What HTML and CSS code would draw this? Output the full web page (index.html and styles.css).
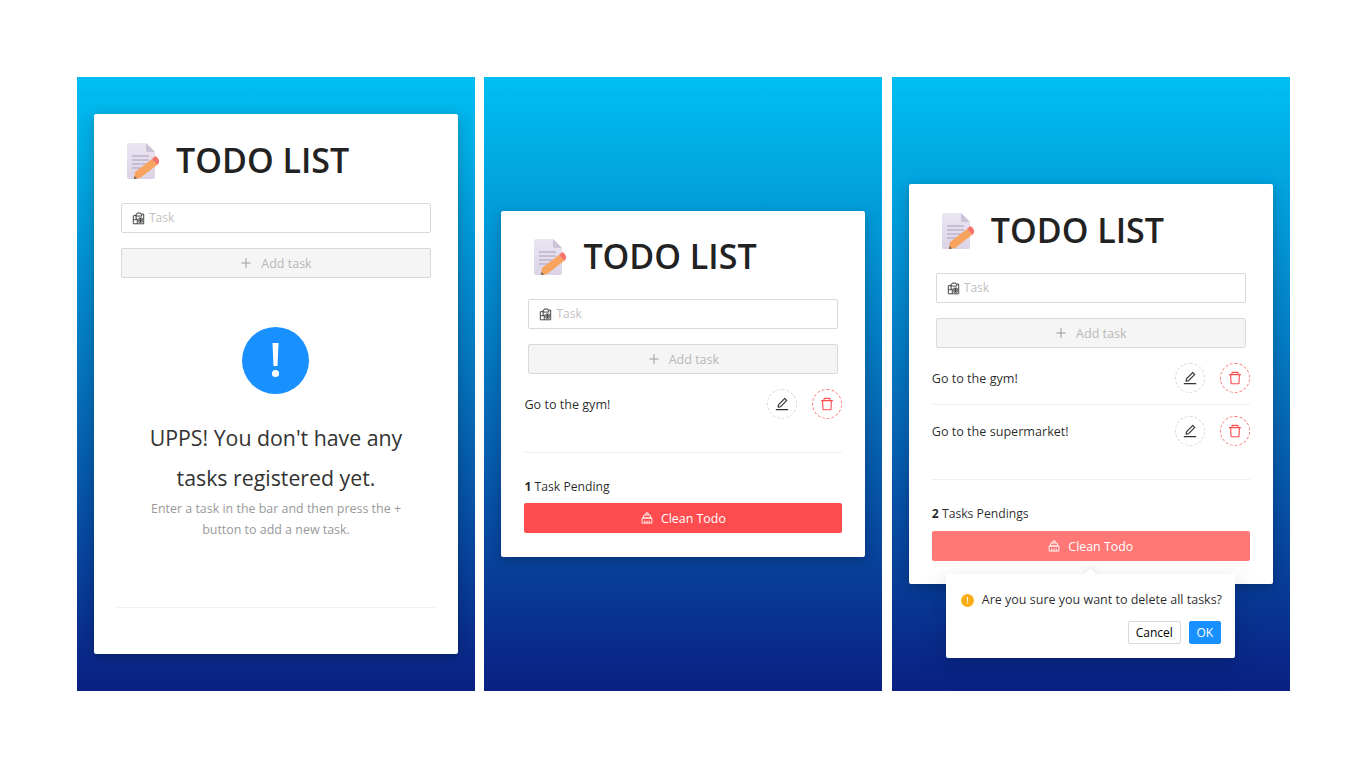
FILE: index.html
```html
<!DOCTYPE html>
<html lang="en">

<head>
    <meta charset="UTF-8">
    <meta name="viewport" content="width=device-width, initial-scale=1.0">
    <title>Todo List</title>
    <link rel="stylesheet" href="styles.css">
</head>

<body>
    <!-- Shared icons -->
    <svg class="sprite" aria-hidden="true">
        <defs>
            <linearGradient id="pageFill" x1="0" y1="0" x2="0" y2="1">
                <stop offset="0" stop-color="#ebe4f1" />
                <stop offset="1" stop-color="#dcd4e6" />
            </linearGradient>
        </defs>
        <symbol id="logo" viewBox="0 0 32 36">
            <path d="M2 0h17l9 9v25a2 2 0 0 1-2 2H2a2 2 0 0 1-2-2V2a2 2 0 0 1 2-2z" fill="url(#pageFill)" />
            <path d="M19 0l9 9h-7a2 2 0 0 1-2-2z" fill="#cbc2d8" />
            <path d="M5 13h17M5 17h17M5 21h14M5 25h9" stroke="#bdb3cb" stroke-width="1.300" />
            <path d="M8 29l17-13 5 6-17 13-6 1z" fill="#f8a45f" />
            <path d="M25 16l2-2a2 2 0 0 1 3 0l2 3a2 2 0 0 1 0 3l-2 2z" fill="#f8736b" />
            <path d="M7.500 33l-.5 3 3-.5z" fill="#6b5a55" />
        </symbol>
        <symbol id="tasks" viewBox="0 0 16 16">
            <path fill="none" stroke="currentColor" stroke-width="1.100"
                d="M5 4.500h-3.400v10h4.900V8.500h-1.500zM6.500 14.500h7.900V2.500h-2.400M6 2.500h-1V5h7V2.500h-1M6.500 2.500V1.200h4v1.300M8.500 7.500h4v5h-4zM10.500 7.500v5M8.500 10h4M1.600 9.500h4.900" />
        </symbol>
        <symbol id="plus" viewBox="64 64 896 896">
            <path fill="currentColor" d="M482 152h60q8 0 8 8v704q0 8-8 8h-60q-8 0-8-8V160q0-8 8-8z" />
            <path fill="currentColor" d="M176 474h672q8 0 8 8v60q0 8-8 8H176q-8 0-8-8v-60q0-8 8-8z" />
        </symbol>
        <symbol id="edit" viewBox="64 64 896 896">
            <path fill="currentColor"
                d="M257.700 752c2 0 4-.2 6-.5L431.900 722c2-.4 3.900-1.300 5.300-2.800l423.900-423.900a9.960 9.960 0 0 0 0-14.100L694.900 114.900c-1.900-1.900-4.400-2.900-7.100-2.900s-5.200 1-7.100 2.900L256.800 538.800c-1.500 1.500-2.400 3.300-2.800 5.300l-29.500 168.200a33.500 33.500 0 0 0 9.400 29.800c6.600 6.400 14.900 9.900 23.800 9.900zm67.400-174.400L687.800 215l73.300 73.300-362.700 362.600-88.900 15.700 15.600-89zM880 836H144c-17.700 0-32 14.300-32 32v36c0 4.400 3.600 8 8 8h784c4.400 0 8-3.600 8-8v-36c0-17.700-14.300-32-32-32z" />
        </symbol>
        <symbol id="trash" viewBox="64 64 896 896">
            <path fill="currentColor"
                d="M360 184h-8c4.400 0 8-3.600 8-8v8h304v-8c0 4.400 3.600 8 8 8h-8v72h72v-80c0-35.300-28.700-64-64-64H352c-35.300 0-64 28.700-64 64v80h72v-72zm504 72H160c-17.700 0-32 14.300-32 32v32c0 4.400 3.600 8 8 8h60.400l24.700 523c1.600 34.100 29.800 61 63.900 61h454c34.200 0 62.300-26.800 63.900-61l24.700-523H888c4.400 0 8-3.600 8-8v-32c0-17.700-14.300-32-32-32zM731.300 840H292.700l-24.200-512h487l-24.200 512z" />
        </symbol>
        <symbol id="clear" viewBox="0 0 16 16">
            <path fill="none" stroke="currentColor" stroke-width="1.200"
                d="M6.500 4V1.200h3V4M2.600 8L4 4h8l1.400 4zM1.500 8h13v6.800H1.500zM5 14.800v-3.300M8 14.800v-3.300M11 14.800v-3.300" />
        </symbol>
        <symbol id="alert" viewBox="0 0 67 67">
            <circle cx="33.500" cy="33.500" r="33.500" fill="currentColor" />
            <path d="M30.500 16h6l-1 23h-4z" fill="#fff" />
            <circle cx="33.500" cy="46.500" r="3.600" fill="#fff" />
        </symbol>
    </svg>

    <main class="screens">
        <!-- Empty list -->
        <section class="panel">
            <div class="card">
                <header class="card-title">
                    <svg class="logo">
                        <use href="#logo"></use>
                    </svg>
                    <h1>TODO LIST</h1>
                </header>
                <div class="task-form">
                    <label class="task-input">
                        <svg class="icon task-icon">
                            <use href="#tasks"></use>
                        </svg>
                        <input type="text" placeholder="Task">
                    </label>
                    <button class="add-btn" type="button" disabled>
                        <svg class="icon plus-icon">
                            <use href="#plus"></use>
                        </svg>
                        Add task
                    </button>
                </div>
                <div class="empty">
                    <svg class="empty-icon">
                        <use href="#alert"></use>
                    </svg>
                    <h2>UPPS! You don't have any tasks registered yet.</h2>
                    <p>Enter a task in the bar and then press the + button to add a new task.</p>
                </div>
                <footer class="card-footer"></footer>
            </div>
        </section>

        <!-- One task -->
        <section class="panel">
            <div class="card card-single">
                <header class="card-title">
                    <svg class="logo">
                        <use href="#logo"></use>
                    </svg>
                    <h1>TODO LIST</h1>
                </header>
                <div class="task-form">
                    <label class="task-input">
                        <svg class="icon task-icon">
                            <use href="#tasks"></use>
                        </svg>
                        <input type="text" placeholder="Task">
                    </label>
                    <button class="add-btn" type="button" disabled>
                        <svg class="icon plus-icon">
                            <use href="#plus"></use>
                        </svg>
                        Add task
                    </button>
                </div>
                <ul class="task-list">
                    <li class="task">
                        <span>Go to the gym!</span>
                        <button class="round-btn" type="button"><svg class="icon">
                                <use href="#edit"></use>
                            </svg></button>
                        <button class="round-btn danger" type="button"><svg class="icon">
                                <use href="#trash"></use>
                            </svg></button>
                    </li>
                </ul>
                <footer class="card-footer">
                    <div class="pending"><b>1</b> Task Pending</div>
                    <button class="clean-btn" type="button">
                        <svg class="icon">
                            <use href="#clear"></use>
                        </svg>
                        Clean Todo
                    </button>
                </footer>
            </div>
        </section>

        <!-- Two tasks with the confirm open -->
        <section class="panel">
            <div class="card">
                <header class="card-title">
                    <svg class="logo">
                        <use href="#logo"></use>
                    </svg>
                    <h1>TODO LIST</h1>
                </header>
                <div class="task-form">
                    <label class="task-input">
                        <svg class="icon task-icon">
                            <use href="#tasks"></use>
                        </svg>
                        <input type="text" placeholder="Task">
                    </label>
                    <button class="add-btn" type="button" disabled>
                        <svg class="icon plus-icon">
                            <use href="#plus"></use>
                        </svg>
                        Add task
                    </button>
                </div>
                <ul class="task-list">
                    <li class="task">
                        <span>Go to the gym!</span>
                        <button class="round-btn" type="button"><svg class="icon">
                                <use href="#edit"></use>
                            </svg></button>
                        <button class="round-btn danger" type="button"><svg class="icon">
                                <use href="#trash"></use>
                            </svg></button>
                    </li>
                    <li class="task">
                        <span>Go to the supermarket!</span>
                        <button class="round-btn" type="button"><svg class="icon">
                                <use href="#edit"></use>
                            </svg></button>
                        <button class="round-btn danger" type="button"><svg class="icon">
                                <use href="#trash"></use>
                            </svg></button>
                    </li>
                </ul>
                <footer class="card-footer">
                    <div class="pending"><b>2</b> Tasks Pendings</div>
                    <button class="clean-btn faded" type="button">
                        <svg class="icon">
                            <use href="#clear"></use>
                        </svg>
                        Clean Todo
                    </button>
                </footer>
                <div class="confirm">
                    <p class="confirm-text"><svg class="warn-icon">
                            <use href="#alert"></use>
                        </svg>Are you sure you want to delete all tasks?</p>
                    <div class="confirm-actions">
                        <button class="cancel-btn" type="button">Cancel</button>
                        <button class="ok-btn" type="button">OK</button>
                    </div>
                </div>
            </div>
        </section>
    </main>
</body>

</html>
```

FILE: styles.css
```css
* {
    box-sizing: border-box;
}

body {
    margin: 0;
    height: 768px;
    background: #fff;
    font-family: "Open Sans", "Noto Sans", sans-serif;
    font-size: 13px;
    color: rgba(0, 0, 0, 0.85);
    overflow: hidden;
}

.sprite {
    display: block;
    width: 0;
    height: 0;
}

.screens {
    display: flex;
    gap: 9.4px;
    padding: 77px 0 0 77px;
}

.panel {
    display: flex;
    align-items: center;
    justify-content: center;
    width: 398px;
    height: 614px;
    background: linear-gradient(180deg, #00bff2 0%, #0a2083 100%);
}

.card {
    position: relative;
    width: 364px;
    padding: 0 23px 23px;
    background: #fff;
    border-radius: 2px;
    box-shadow: 0 3px 12px rgba(0, 0, 0, 0.25);
}

.card-single {
    padding-bottom: 24px;
}

.card-title {
    display: flex;
    align-items: center;
    height: 89px;
    padding: 4px 0 0 10px;
}

.card-single .card-title {
    height: 88px;
}

.logo {
    width: 32px;
    height: 36px;
    margin-right: 17px;
    flex: none;
}

h1 {
    margin: 0 0 2px;
    font-size: 34px;
    font-weight: 600;
    color: #222;
    white-space: nowrap;
}

.icon {
    width: 14px;
    height: 14px;
    flex: none;
}

.task-form {
    display: flex;
    flex-direction: column;
    gap: 15px;
    padding: 0 4px;
}

.task-input {
    display: flex;
    align-items: center;
    gap: 4px;
    height: 30px;
    padding: 0 10px;
    border: 1px solid #d9d9d9;
    border-radius: 2px;
}

.task-icon {
    width: 13px;
    height: 13px;
    color: #333;
}

.task-input input {
    flex: 1;
    min-width: 0;
    padding: 0 0 1px;
    border: 0;
    outline: 0;
    font: inherit;
    font-size: 12px;
}

.task-input input::placeholder {
    color: #bfbfbf;
}

.add-btn {
    display: flex;
    align-items: center;
    justify-content: center;
    gap: 9px;
    height: 30px;
    border: 1px solid #d9d9d9;
    border-radius: 2px;
    background: #f5f5f5;
    color: #b8b8b8;
    font: inherit;
    font-size: 12.500px;
}

.plus-icon {
    width: 12px;
    height: 12px;
    color: #999;
}

.empty {
    margin-top: 49px;
    text-align: center;
}

.empty-icon {
    display: block;
    width: 67px;
    height: 67px;
    margin-left: 125px;
    color: #1890ff;
}

.empty h2 {
    margin: 24px 0 0;
    padding: 0 20px;
    font-size: 21.300px;
    font-weight: 400;
    line-height: 40px;
    color: #333;
}

.empty p {
    margin: 0 0 67px;
    padding: 0 20px;
    font-size: 12.450px;
    line-height: 21px;
    color: #999;
}

.task-list {
    margin: 15px 0 0;
    padding: 0;
    list-style: none;
}

.task {
    display: flex;
    align-items: center;
    gap: 15px;
}

.task + .task {
    margin-top: 11px;
    padding-top: 11px;
    border-top: 1px solid #f0f0f0;
}

.task span {
    flex: 1;
    font-size: 12.600px;
}

.round-btn {
    display: flex;
    align-items: center;
    justify-content: center;
    width: 30px;
    height: 30px;
    padding: 0;
    border: 1px dashed #d9d9d9;
    border-radius: 50%;
    background: #fff;
    color: #333;
}

.round-btn.danger {
    border-color: #ff7875;
    color: #ff4d4f;
}

.card-footer {
    margin-top: 33px;
    padding-top: 23px;
    border-top: 1px solid #f0f0f0;
}

.empty + .card-footer {
    margin-top: 0;
}

.pending {
    height: 22px;
    margin-bottom: 6px;
    font-size: 12.200px;
    line-height: 22px;
}

.card-single .pending {
    margin-bottom: 5px;
}

.clean-btn {
    display: flex;
    align-items: center;
    justify-content: center;
    gap: 8px;
    width: 100%;
    height: 30px;
    border: 0;
    border-radius: 2px;
    background: #ff4d4f;
    color: #fff;
    font: inherit;
    font-size: 12.400px;
}

.clean-btn .icon {
    width: 12px;
    height: 12px;
}

.clean-btn.faded {
    background: #ff7875;
}

.confirm {
    position: absolute;
    left: 37px;
    top: 390px;
    width: 289px;
    height: 84px;
    padding: 16px 14px 0 15px;
    background: #fff;
    border-radius: 2px;
    box-shadow: 0 3px 6px -4px rgba(0, 0, 0, 0.12), 0 6px 16px 0 rgba(0, 0, 0, 0.08), 0 9px 28px 8px rgba(0, 0, 0, 0.05);
}

.confirm::before {
    content: "";
    position: absolute;
    left: 140px;
    top: -4px;
    width: 9px;
    height: 9px;
    background: #fff;
    box-shadow: -2px -2px 5px rgba(0, 0, 0, 0.06);
    transform: rotate(45deg);
}

.confirm-text {
    display: flex;
    align-items: center;
    gap: 8px;
    margin: 0;
    font-size: 12.500px;
    line-height: 20px;
    white-space: nowrap;
}

.warn-icon {
    width: 13px;
    height: 13px;
    color: #faad14;
    flex: none;
}

.confirm-actions {
    display: flex;
    justify-content: flex-end;
    gap: 8px;
    margin-top: 11px;
}

.cancel-btn,
.ok-btn {
    height: 23px;
    padding: 0;
    border: 1px solid #d9d9d9;
    border-radius: 2px;
    background: #fff;
    font: inherit;
    font-size: 12px;
}

.cancel-btn {
    width: 53px;
}

.ok-btn {
    width: 32px;
    border-color: #1890ff;
    background: #1890ff;
    color: #fff;
}
```
